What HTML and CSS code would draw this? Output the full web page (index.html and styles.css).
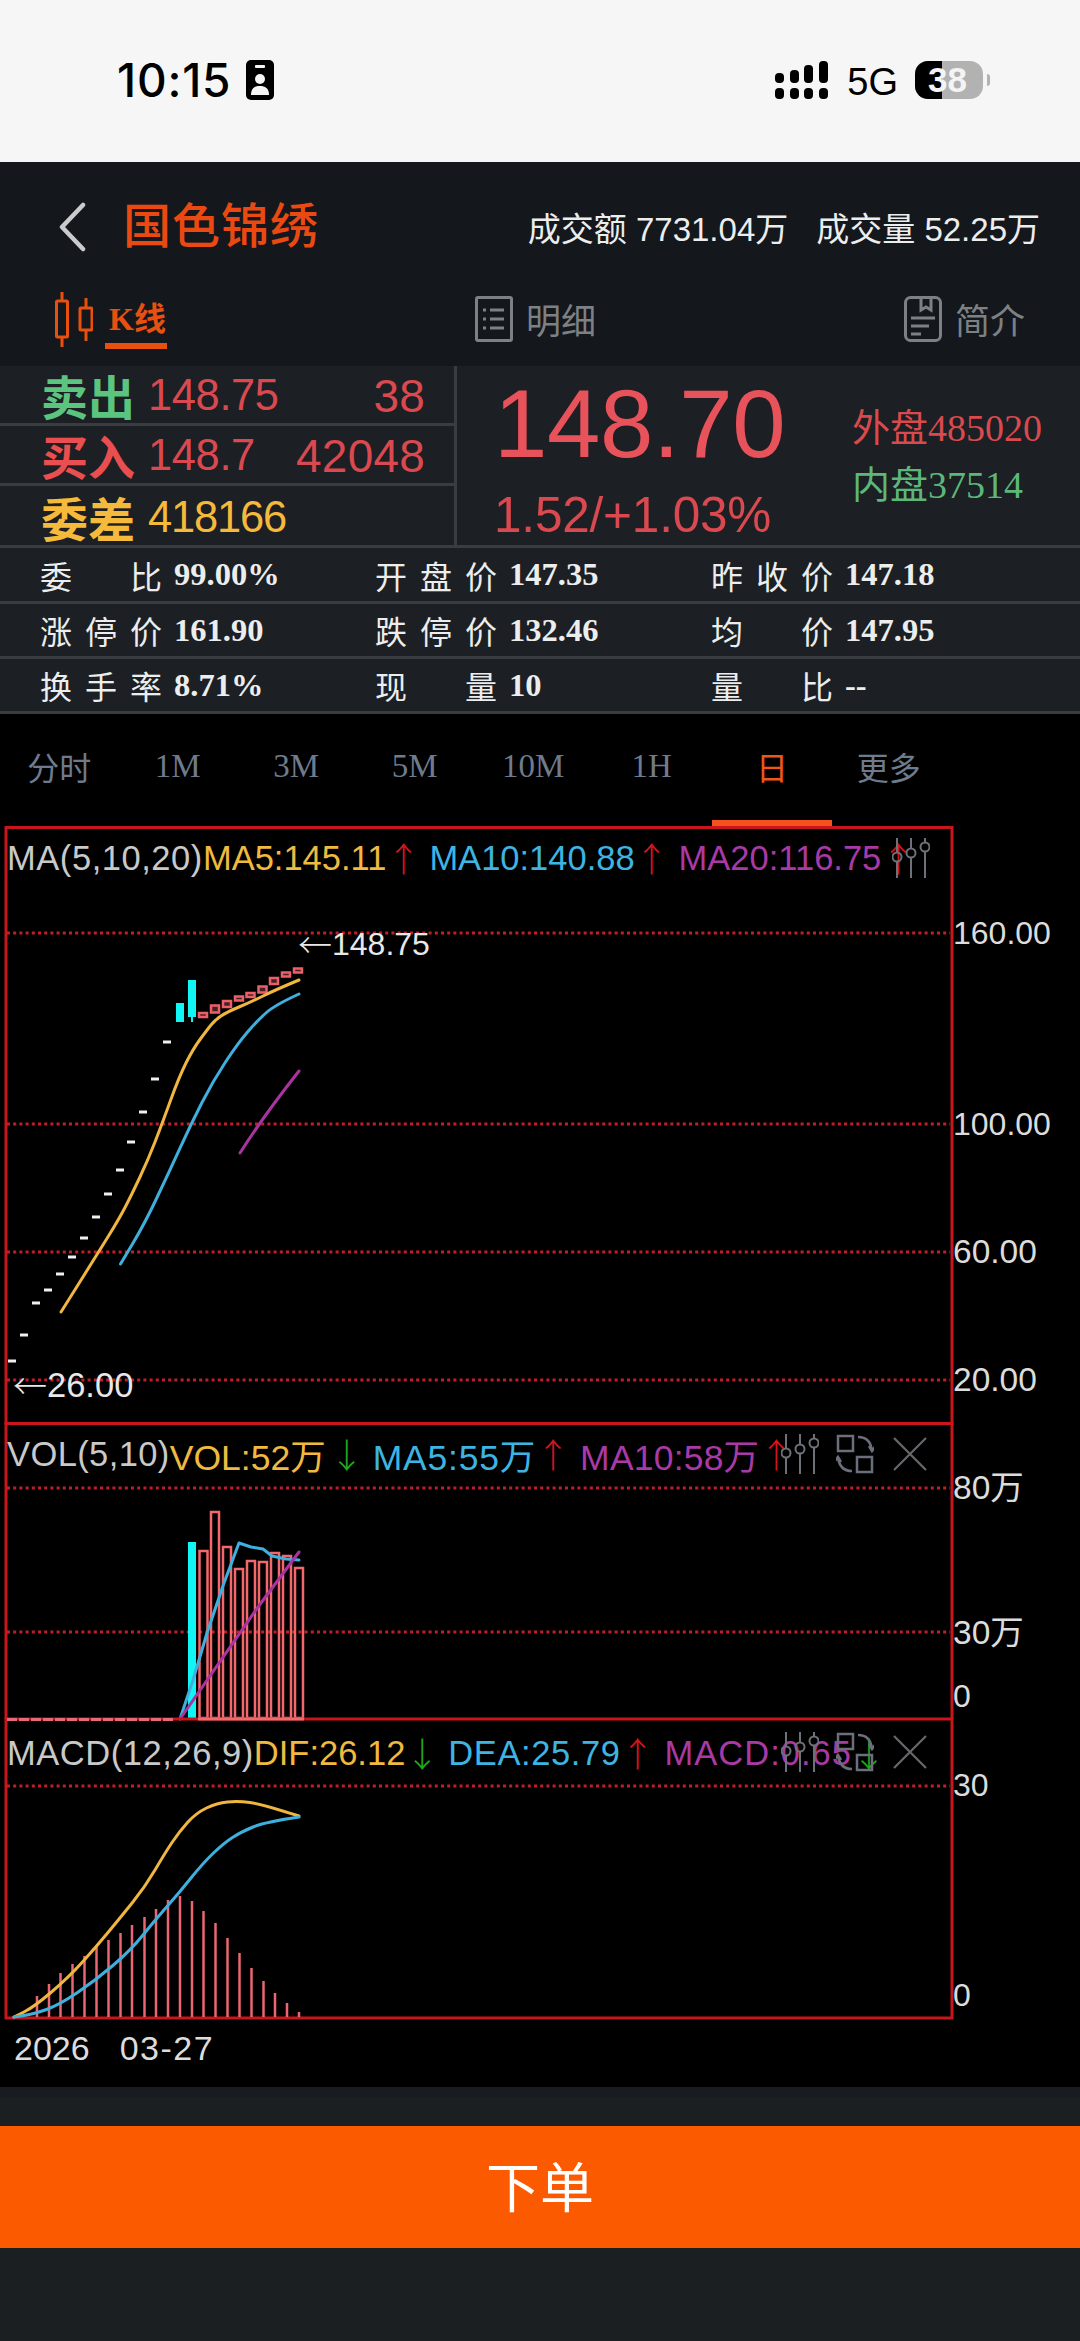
FILE: index.html
```html
<!DOCTYPE html>
<html lang="zh">
<head>
<meta charset="utf-8">
<title>国色锦绣</title>
<link rel="stylesheet" href="styles.css">
</head>
<body>
<div class="screen">
  <div class="status">
    <div class="status-left">
      <span class="time">10:15</span>
      <svg class="focus" viewBox="0 0 28 40"><rect width="28" height="40" rx="5" fill="#000"/><rect x="9" y="5" width="10" height="3" rx="1" fill="#f6f6f6"/><circle cx="14" cy="19" r="5" fill="#f6f6f6"/><path d="M5 35c0-7 4-9 9-9s9 2 9 9z" fill="#f6f6f6"/></svg>
    </div>
    <div class="status-right">
      <svg class="signal" viewBox="0 0 53 38"><g fill="#000"><rect x="0" y="12" width="9" height="10" rx="4"/><rect x="0" y="27" width="9" height="11" rx="4"/><rect x="15" y="9" width="9" height="13" rx="4"/><rect x="15" y="27" width="9" height="11" rx="4"/><rect x="29" y="4" width="9" height="18" rx="4"/><rect x="29" y="27" width="9" height="11" rx="4"/><rect x="44" y="0" width="9" height="22" rx="4"/><rect x="44" y="27" width="9" height="11" rx="4"/></g></svg>
      <span class="net">5G</span>
      <div class="battery"><div class="battery-fill"></div><span class="battery-num">38</span></div>
      <div class="battery-tip"></div>
    </div>
  </div>

  <div class="header">
    <div class="title-row">
      <svg class="back" viewBox="0 0 28 50"><path d="M25 3 4 25l21 22" fill="none" stroke="#c9cbcd" stroke-width="4.5" stroke-linecap="round" stroke-linejoin="round"/></svg>
      <h1 class="stock-name">国色锦绣</h1>
      <div class="turnover"><span>成交额 7731.04万</span><span>成交量 52.25万</span></div>
    </div>
    <div class="tabs">
      <div class="tab tab-active">
        <svg class="tab-kicon" viewBox="0 0 38 55"><g fill="none" stroke="#e8500f" stroke-width="3"><rect x="1.5" y="9" width="11" height="36" rx="1"/><path d="M7 0v9M7 45v10"/><rect x="25" y="16" width="12" height="22" rx="1"/><path d="M31 6v10M31 38v11"/></g></svg>
        <span class="tab-k"><b>K</b>线</span>
      </div>
      <div class="tab">
        <svg class="tab-icon" viewBox="0 0 38 46"><g fill="none" stroke="#7d8184" stroke-width="3"><rect x="1.5" y="1.5" width="35" height="43" rx="1.5"/><path d="M15 14h14M15 23h14M15 32h14M8 14h3M8 23h3M8 32h3"/></g></svg>
        <span class="tab-text">明细</span>
      </div>
      <div class="tab">
        <svg class="tab-icon" viewBox="0 0 38 46"><g fill="none" stroke="#7d8184" stroke-width="3"><rect x="1.5" y="1.5" width="35" height="43" rx="5"/><path d="M17 2v12l5-3 5 3V2M7 22h24M7 30h18M7 38h10"/></g></svg>
        <span class="tab-text">简介</span>
      </div>
    </div>
  </div>

  <div class="quote">
    <div class="book">
      <div class="book-row"><span class="book-label green">卖出</span><span class="book-price red">148.75</span><span class="book-qty red">38</span></div>
      <div class="book-row"><span class="book-label red-strong">买入</span><span class="book-price red">148.7</span><span class="book-qty red">42048</span></div>
      <div class="book-row"><span class="book-label gold">委差</span><span class="book-price gold">418166</span></div>
    </div>
    <div class="last">
      <div class="last-main">
        <div class="last-price">148.70</div>
        <div class="last-change">1.52/+1.03%</div>
      </div>
      <div class="inout">
        <div class="inout-red">外盘485020</div>
        <div class="inout-green">内盘37514</div>
      </div>
    </div>
  </div>

  <div class="stats">
    <div class="stats-row">
      <div class="stat"><span class="stat-label">委比</span><b>99.00%</b></div>
      <div class="stat"><span class="stat-label">开盘价</span><b>147.35</b></div>
      <div class="stat"><span class="stat-label">昨收价</span><b>147.18</b></div>
    </div>
    <div class="stats-row">
      <div class="stat"><span class="stat-label">涨停价</span><b>161.90</b></div>
      <div class="stat"><span class="stat-label">跌停价</span><b>132.46</b></div>
      <div class="stat"><span class="stat-label">均价</span><b>147.95</b></div>
    </div>
    <div class="stats-row">
      <div class="stat"><span class="stat-label">换手率</span><b>8.71%</b></div>
      <div class="stat"><span class="stat-label">现量</span><b>10</b></div>
      <div class="stat"><span class="stat-label">量比</span><b>--</b></div>
    </div>
  </div>

  <div class="periods">
    <span class="period period-cjk">分时</span>
    <span class="period">1M</span>
    <span class="period">3M</span>
    <span class="period">5M</span>
    <span class="period">10M</span>
    <span class="period">1H</span>
    <span class="period period-cjk period-active">日</span>
    <span class="period period-cjk">更多</span>
  </div>

  <div class="charts">
    <section class="pane pane-ma">
      <svg class="plot" viewBox="0 826 1080 596">
        <rect x="6" y="827.5" width="946" height="596" class="frame"/>
        <path class="grid" d="M7 933H950M7 1124H950M7 1252H950M7 1380H950"/>
        <path class="dash" d="M8 1361h8M20 1335h8M32 1303h8M44 1290h8M56 1274h8M68 1257h8M80 1238h8M92 1217h8M104 1194h8M116 1170h8M127 1142h8M139 1112h8M151 1079h8M163 1042h8"/>
        <rect x="176" y="1003" width="8" height="19" fill="#12f5f5"/>
        <rect x="188" y="980" width="8" height="37" fill="#12f5f5"/>
        <path d="M192 1017v5" stroke="#12f5f5" stroke-width="2"/>
        <g class="candle">
          <rect x="199" y="1013" width="8" height="4"/>
          <rect x="211" y="1005.500" width="8" height="7"/>
          <rect x="223" y="1001" width="8" height="6"/>
          <rect x="235" y="996.500" width="8" height="4"/>
          <rect x="246.500" y="993" width="8" height="4"/>
          <rect x="258.500" y="986.500" width="8" height="6"/>
          <rect x="270" y="978" width="8" height="6"/>
          <rect x="282" y="972.500" width="8" height="4"/>
          <rect x="294" y="968.500" width="8" height="4"/>
        </g>
        <path class="line yellow" d="M61 1312L79.500 1282.500Q98 1253 108.500 1236Q119 1219 125 1207.500Q131 1196 139.500 1178Q148 1160 155 1142Q162 1124 170.500 1100.500Q179 1077 186 1063Q193 1049 200 1039.500Q207 1030 211 1025Q215 1020 221 1016Q227 1012 239 1007Q251 1002 263 996Q275 990 299 980"/>
        <path class="line blue" d="M120.500 1264L132.750 1243.500Q145 1223 157 1197.500Q169 1172 180 1148Q191 1124 202 1102.500Q213 1081 225.500 1062Q238 1043 248 1031.500Q258 1020 266.500 1012.500Q275 1005 299 994"/>
        <path class="line purple" d="M240 1153Q262 1118 299 1071"/>
      </svg>
      <div class="legend">
        <span class="lg-name">MA(5,10,20)</span>
        <span class="lg-y">MA5:145.11</span><span class="arrow up">↑</span>
        <span class="lg-b">MA10:140.88</span><span class="arrow up">↑</span>
        <span class="lg-p">MA20:116.75</span><span class="arrow up">↑</span>
      </div>
      <div class="tools tools-one">
        <svg class="tool" viewBox="0 0 38 40"><use href="#i-sliders"/></svg>
      </div>
      <span class="mark mark-high"><i class="mark-arrow">←</i>148.75</span>
      <span class="mark mark-low"><i class="mark-arrow">←</i>26.00</span>
      <span class="axis ax-160">160.00</span>
      <span class="axis ax-100">100.00</span>
      <span class="axis ax-wide ax-60">60.00</span>
      <span class="axis ax-wide ax-20">20.00</span>
    </section>

    <section class="pane pane-vol">
      <svg class="plot" viewBox="0 1422 1080 297">
        <path class="frame" d="M6 1422V1719M952 1422V1719"/>
        <path class="grid" d="M7 1488H950M7 1632H950"/>
        <rect x="188" y="1542" width="8" height="177" fill="#12f5f5"/>
        <g class="volbar">
          <rect x="199.500" y="1551" width="8" height="167"/>
          <rect x="211" y="1512" width="8" height="206"/>
          <rect x="223" y="1547" width="8" height="171"/>
          <rect x="235" y="1569" width="8" height="149"/>
          <rect x="247" y="1561" width="8" height="157"/>
          <rect x="259" y="1562" width="8" height="156"/>
          <rect x="271" y="1553" width="8" height="165"/>
          <rect x="283" y="1556" width="8" height="162"/>
          <rect x="295" y="1568" width="8" height="150"/>
        </g>
        <path class="line blue" d="M180 1719 193 1680 207 1633 224 1583 239 1543 251 1547 263 1549 272 1556 286 1559 299 1560"/>
        <path class="line purple" d="M180 1719 258 1607 299 1552"/>
      </svg>
      <div class="legend">
        <span class="lg-name">VOL(5,10)</span>
        <span class="lg-y">VOL:52万</span><span class="arrow down">↓</span>
        <span class="lg-b">MA5:55万</span><span class="arrow up">↑</span>
        <span class="lg-p">MA10:58万</span><span class="arrow up">↑</span>
      </div>
      <div class="tools">
        <svg class="tool" viewBox="0 0 38 40"><use href="#i-sliders"/></svg>
        <svg class="tool" viewBox="0 0 38 40"><use href="#i-swap"/></svg>
        <svg class="tool tool-x" viewBox="0 0 34 34"><use href="#i-close"/></svg>
      </div>
      <span class="axis ax-wide ax-80w">80万</span>
      <span class="axis ax-wide ax-30w">30万</span>
      <span class="axis ax-0w">0</span>
    </section>

    <section class="pane pane-macd">
      <svg class="plot" viewBox="0 1719 1080 299">
        <rect x="6" y="1719" width="946" height="299" class="frame"/>
        <path d="M7 1719.500H173" stroke="#e46a7a" stroke-width="3" stroke-dasharray="10 2"/>
        <path d="M198 1719H304" stroke="#f2686c" stroke-width="3"/>
        <path class="grid" d="M7 1786H950"/>
        <path class="macdbar" d="M37 2017V1996M49 2017V1984M60.500 2017V1973M72.500 2017V1964M84.500 2017V1956M96.500 2017V1947M108.500 2017V1940M120.500 2017V1933M132 2017V1925M144.500 2017V1917M156 2017V1909M168 2017V1900M180 2017V1896M192 2017V1901M203.500 2017V1911M215.500 2017V1923M227.500 2017V1938M239.500 2017V1953M251.500 2017V1968M263.500 2017V1981M275 2017V1993M287 2017V2003M299 2017V2012"/>
        <path class="line yellow" d="M14 2017L24 2012Q34 2007 51.500 1992Q69 1977 82.500 1962Q96 1947 108 1932.500Q120 1918 132.500 1902.500Q145 1887 155 1870Q165 1853 172 1842.500Q179 1832 187.500 1822.500Q196 1813 206.500 1808Q217 1803 227.500 1802Q238 1801 250 1802.500Q262 1804 299 1816"/>
        <path class="line blue" d="M14 2017L24 2015.500Q34 2014 46.500 2009.500Q59 2005 77.500 1992.500Q96 1980 113.500 1965Q131 1950 143 1935Q155 1920 167 1906.500Q179 1893 191 1878Q203 1863 213.500 1853Q224 1843 232.500 1837.500Q241 1832 253 1827Q265 1822 299 1817"/>
      </svg>
      <div class="legend">
        <span class="lg-name">MACD(12,26,9)</span>
        <span class="lg-y">DIF:26.12</span><span class="arrow down">↓</span>
        <span class="lg-b">DEA:25.79</span><span class="arrow up">↑</span>
        <span class="lg-p">MACD:0.65</span><span class="arrow down">↓</span>
      </div>
      <div class="tools tools-macd">
        <svg class="tool" viewBox="0 0 38 40"><use href="#i-sliders"/></svg>
        <svg class="tool" viewBox="0 0 38 40"><use href="#i-swap"/></svg>
        <svg class="tool tool-x" viewBox="0 0 34 34"><use href="#i-close"/></svg>
      </div>
      <span class="axis ax-30">30</span>
      <span class="axis ax-0">0</span>
    </section>

    <div class="dates"><span>2026</span><span>03-27</span></div>
  </div>

  <div class="footer">
    <div class="footer-band"></div>
    <button class="order">下单</button>
  </div>

  <svg class="defs" width="0" height="0">
    <defs>
      <g id="i-sliders" fill="none" stroke="#6e7178" stroke-width="2">
        <path d="M5 0v14M5 24v16M19 0v10M19 20v20M33 0v4M33 14v26"/>
        <circle cx="5" cy="19" r="4.500"/><circle cx="19" cy="15" r="4.500"/><circle cx="33" cy="9" r="4.500"/>
      </g>
      <g id="i-swap" fill="none" stroke="#6b6f7c" stroke-width="2.500">
        <rect x="2" y="2" width="15" height="15"/><rect x="21" y="23" width="15" height="15"/>
        <path d="M22 3c8 0 13 5 14 14M33 12l3 5 3-4M16 37C8 37 3 32 2 23M5 28l-3-5-3 4"/>
      </g>
      <g id="i-close" fill="none" stroke="#66686c" stroke-width="2.200"><path d="M1 1 33 33M33 1 1 33"/></g>
    </defs>
  </svg>
</div>
</body>
</html>
```
FILE: styles.css
```css
* { box-sizing: border-box; margin: 0; padding: 0; }
html, body { width: 1080px; height: 2341px; overflow: hidden; }
body { font-family: "Liberation Sans", "Noto Sans CJK SC", sans-serif; background: #1c1f22; }
.screen { width: 1080px; height: 2341px; display: flex; flex-direction: column; position: relative; }
.defs { position: absolute; }

/* status bar */
.status { height: 162px; flex: none; background: #f6f6f6; display: flex; justify-content: space-between; padding: 60px 90px 0 117px; color: #000; }
.status-left { display: flex; align-items: flex-start; gap: 15px; }
.time { font-family: Inter, "Liberation Sans", sans-serif; font-size: 46px; font-weight: 500; line-height: 41px; letter-spacing: .8px; }
.focus { width: 28px; height: 40px; }
.status-right { display: flex; align-items: flex-start; }
.signal { width: 53px; height: 38px; margin-top: 1px; }
.net { font-family: "Liberation Sans", sans-serif; font-size: 38px; line-height: 40px; margin: 2px 0 0 19px; }
.battery { width: 68px; height: 38px; margin: 1px 0 0 17px; border-radius: 13px; background: #b2b2b2; position: relative; overflow: hidden; }
.battery-fill { width: 27px; height: 100%; background: #000; }
.battery-num { position: absolute; left: 13px; top: 0; font-size: 35px; font-weight: 700; line-height: 38px; color: #f4f4f4; }
.battery-tip { width: 3px; height: 12px; margin: 14px 0 0 4px; border-radius: 0 4px 4px 0; background: #b2b2b2; }

/* header */
.header { height: 204px; flex: none; background: #14171c; }
.title-row { height: 129px; display: flex; align-items: center; padding-left: 58px; }
.back { width: 28px; height: 50px; flex: none; }
.stock-name { font-size: 48px; font-weight: 500; color: #ea4a12; margin-left: 37px; letter-spacing: 1px; line-height: 60px; }
.turnover { margin-left: auto; margin-right: 40px; display: flex; gap: 28px; font-size: 33px; color: #eceded; }
.tabs { height: 56px; display: flex; justify-content: space-between; align-items: center; padding: 0 55px; color: #7d8184; font-size: 35px; }
.tab { display: flex; align-items: center; gap: 13px; }
.tab-active { gap: 12px; color: #e8500f; }
.tab-kicon { width: 38px; height: 55px; }
.tab-icon { width: 38px; height: 46px; }
.tab-text { margin-top: -2px; }
.tab-k { font-size: 32px; font-weight: 700; line-height: 40px; padding: 0 1px 4px 4px; border-bottom: 6px solid #e8500f; margin-top: 10px; }
.tab-k b { font-family: "Liberation Serif", serif; }

/* quote */
.quote { height: 182px; flex: none; background: #1c1f23; display: flex; border-bottom: 3px solid #3a3d40; }
.book { width: 454px; flex: none; }
.book-row { height: 60px; display: flex; align-items: center; padding: 2px 29px 0 41px; border-bottom: 3px solid #3a3d40; font-size: 43.500px; }
.book-row:last-child { border-bottom: 0; }
.book-label { font-size: 47px; font-weight: 700; width: 107px; flex: none; margin-top: -2px; }
.book-price { letter-spacing: -.4px; }
.book-qty { margin-left: auto; font-size: 46px; letter-spacing: .2px; }
.green { color: #5bc47e; }
.red { color: #d9494f; }
.red-strong { color: #e94f50; }
.gold { color: #f5b93b; }
.gold.book-price { letter-spacing: -1.2px; }
.last { flex: 1; border-left: 3px solid #3a3d40; display: flex; padding-left: 37px; }
.last-main { width: 358px; flex: none; }
.last-price { font-size: 96px; line-height: 110px; color: #e8525a; letter-spacing: -.4px; margin-top: 3px; }
.last-change { font-size: 49.500px; line-height: 60px; color: #d9494f; letter-spacing: -.2px; margin-top: 6px; white-space: nowrap; }
.inout { padding-top: 34px; font-family: "Liberation Serif", "Noto Sans CJK SC", serif; font-size: 38px; line-height: 57px; white-space: nowrap; letter-spacing: 0; }
.inout-red { color: #d84a4d; }
.inout-green { color: #5bb87a; }

/* stats */
.stats { flex: none; background: #1c1f23; }
.stats-row { height: 55px; display: grid; grid-template-columns: 335px 336px 1fr; padding-left: 40px; border-bottom: 3px solid #3a3d40; color: #eceded; align-items: center; }
.stats-row:first-child { height: 56px; }
.stat { display: flex; align-items: center; font-size: 32px; }
.stat-label { width: 122px; text-align-last: justify; flex: none; }
.stat b { margin-left: 12px; font-family: "Liberation Serif", serif; font-weight: 700; font-size: 32.500px; }

/* periods */
.periods { height: 112px; flex: none; background: #000; display: grid; grid-template-columns: repeat(8, 118.500px); align-items: center; font-family: "Liberation Serif", serif; font-size: 33px; color: #6f7b8c; text-align: center; }
.period { height: 100%; display: flex; align-items: center; justify-content: center; padding-bottom: 8px; }
.period-cjk { font-family: "Noto Sans CJK SC", sans-serif; font-size: 32px; }
.period-active { color: #f0561a; border-bottom: 6px solid #f4511e; padding-bottom: 2px; width: 120px; margin-left: 1px; }

/* charts */
.charts { flex: 1; min-height: 0; background: #000; display: flex; flex-direction: column; }
.pane { position: relative; flex: none; width: 1080px; }
.pane-ma { height: 596px; }
.pane-vol { height: 297px; }
.pane-macd { height: 299px; }
.plot { position: absolute; left: 0; top: 0; width: 1080px; height: 100%; overflow: visible; }
.frame { fill: none; stroke: #c8161c; stroke-width: 3; }
.grid { stroke: #c01f2a; stroke-width: 3; stroke-dasharray: 3 3.200; fill: none; }
.dash { stroke: #f0f0f0; stroke-width: 3; fill: none; }
.candle rect { fill: #4a1f24; stroke: #ea6068; stroke-width: 2.500; }
.volbar rect { fill: none; stroke: #f2686c; stroke-width: 2.500; }
.macdbar { stroke: #ea6672; stroke-width: 2.500; fill: none; }
.line { fill: none; stroke-width: 3; stroke-linejoin: round; stroke-linecap: round; }
.line.yellow { stroke: #f0b63f; }
.line.blue { stroke: #3fb0de; }
.line.purple { stroke: #a934a0; }

.legend { position: relative; display: flex; align-items: center; height: 40px; padding-left: 7px; font-size: 34.500px; white-space: nowrap; }
.pane-ma .legend { margin-top: 12px; }
.pane-vol .legend { margin-top: 12px; }
.pane-macd .legend { margin-top: 14px; }
.lg-name { color: #c9c9c9; letter-spacing: .55px; }
.lg-y { color: #f0b93f; }
.lg-b { color: #3db4e2; margin-left: 9px; }
.lg-p { color: #a93aa5; margin-left: 10px; }
.pane-vol .legend { font-size: 35.500px; }
.pane-vol .lg-name { font-size: 34.500px; letter-spacing: .4px; }
.pane-vol .lg-y + .arrow { margin-left: 4px; }
.pane-vol .lg-b { letter-spacing: .8px; }
.pane-vol .lg-p { letter-spacing: .2px; }
.pane-macd .lg-b { letter-spacing: .6px; }
.pane-macd .lg-p { letter-spacing: 1px; }
.arrow { font-family: "Noto Sans CJK SC", sans-serif; font-weight: 300; font-size: 34px; line-height: 40px; width: 34px; margin-left: 0; text-align: center; letter-spacing: 0; }
.up { color: #d8141c; }
.down { color: #22a81e; }

.tools { position: absolute; left: 781px; top: 12px; display: flex; align-items: center; gap: 17px; }
.tools-macd { top: 13px; }
.tool { width: 38px; height: 40px; }
.tool-x { width: 34px; height: 34px; margin-left: 2px; }
.tools-one { left: 892px; top: 12px; }

.axis { position: absolute; left: 953px; font-size: 32px; line-height: 36px; color: #dcdcdc; white-space: nowrap; }
.ax-wide { font-size: 33.500px; }
.ax-160 { top: 89px; }
.ax-100 { top: 280px; }
.ax-60 { top: 408px; }
.ax-20 { top: 536px; }
.ax-80w { top: 48px; }
.ax-30w { top: 193px; }
.ax-0w { top: 256px; }
.ax-30 { top: 48px; }
.ax-0 { top: 258px; }
.mark { position: absolute; display: flex; align-items: center; font-size: 32px; line-height: 36px; color: #e8e8e8; white-space: nowrap; }
.mark-arrow { font-family: "Noto Sans CJK SC", sans-serif; font-weight: 300; font-style: normal; font-size: 34px; width: 34px; }
.mark-high { left: 298px; top: 100px; }
.mark-low { left: 13px; top: 541px; font-size: 34.500px; }

.dates { display: flex; gap: 30px; padding: 10px 0 0 14px; font-size: 34px; line-height: 40px; color: #dcdcdc; }
.dates span:last-child { letter-spacing: 1.5px; }

/* footer */
.footer { height: 254px; flex: none; background: #1c1f22; }
.footer-band { height: 10px; background: #181b1f; }
.order { display: block; width: 100%; height: 122px; margin-top: 29px; border: 0; background: #fb5a00; color: #fff; font-family: "Noto Sans CJK SC", sans-serif; font-size: 54px; padding-bottom: 6px; }
```
